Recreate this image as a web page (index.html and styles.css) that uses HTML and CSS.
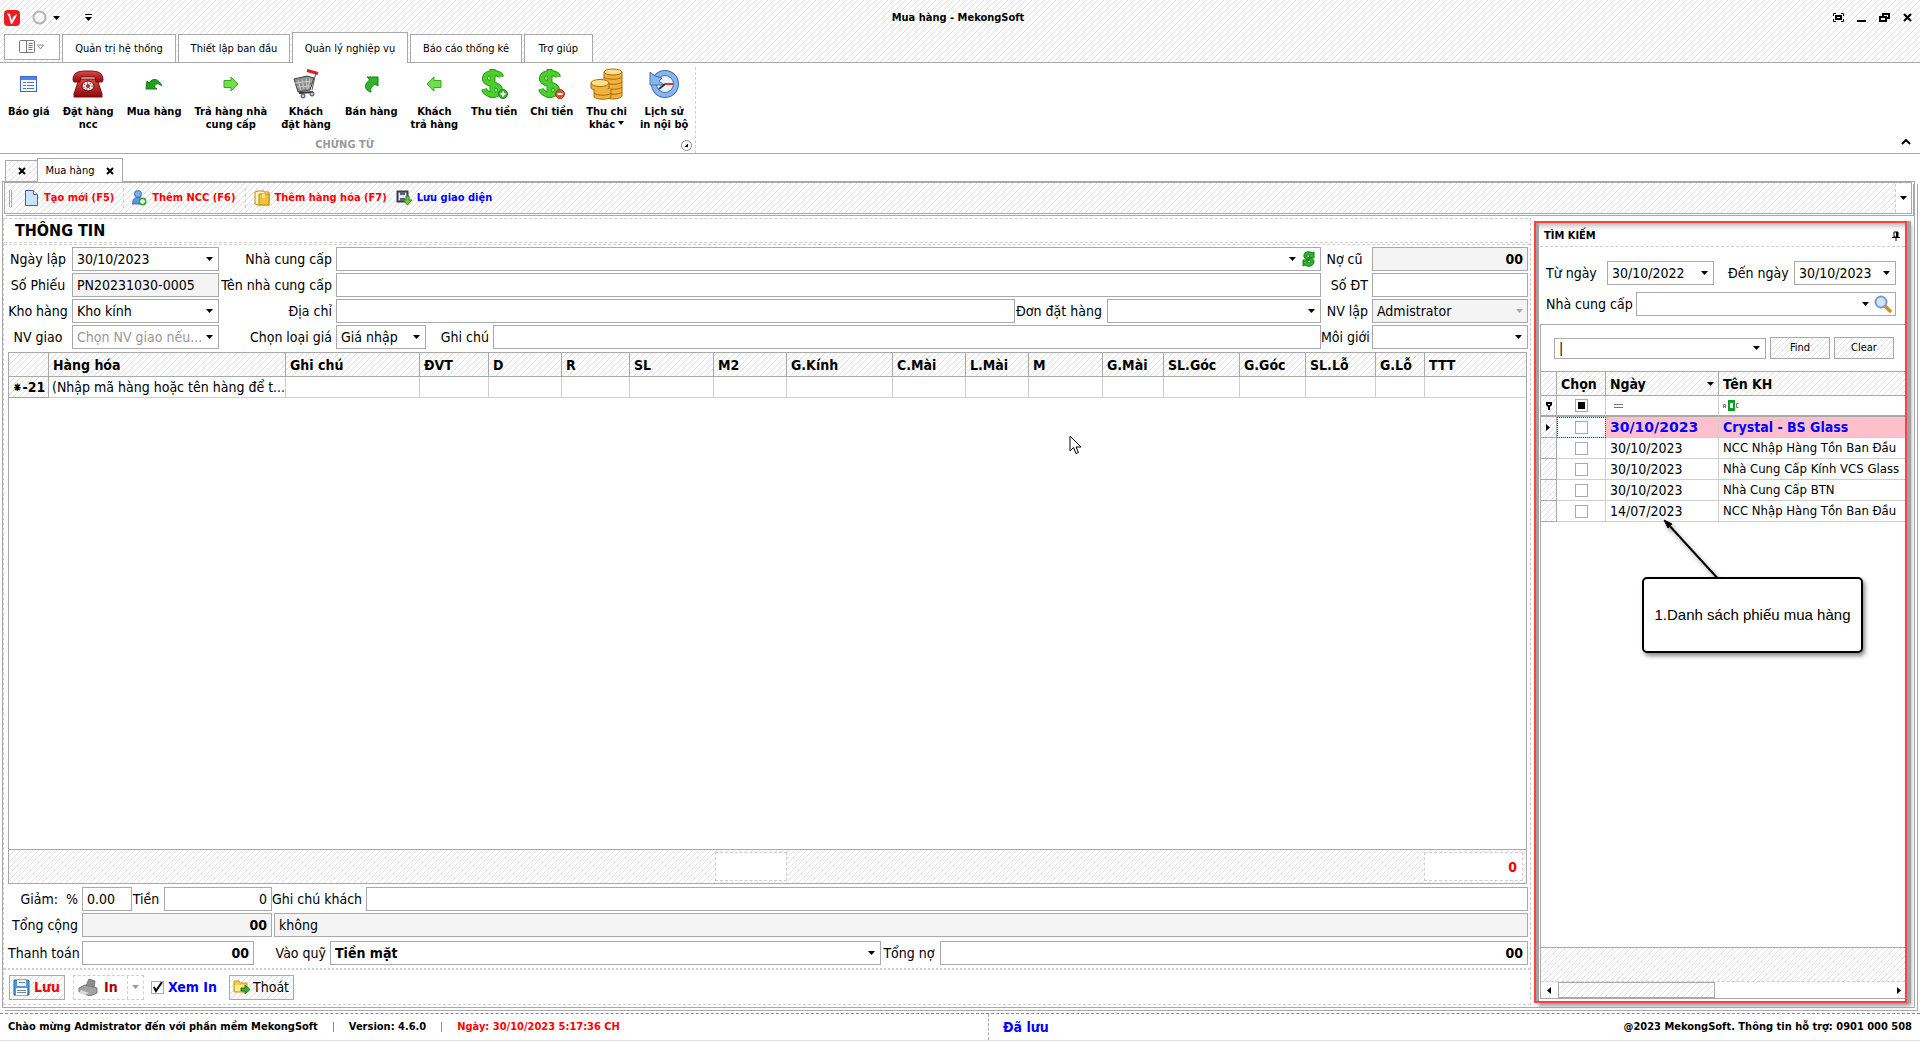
FILE: index.html
```html
<!DOCTYPE html>
<html lang="vi">
<head>
<meta charset="utf-8">
<title>Mua hàng - MekongSoft</title>
<link rel="stylesheet" href="styles.css">
</head>
<body>
<header class="top hatch">
  <div class="titlebar">
    <div class="quick">
      <svg width="16" height="16" viewBox="0 0 16 16"><rect width="16" height="16" rx="4" fill="#ed1c24"/><path d="M3 3l3 1 2 7 1-4 4-3-1 3-4 7H7L5 7z" fill="#fff"/></svg>
      <svg width="15" height="15" viewBox="0 0 15 15"><circle cx="7.500" cy="7.500" r="6" fill="none" stroke="#b4b4b4" stroke-width="2"/></svg>
      <svg width="7" height="4" viewBox="0 0 7 4"><path d="M0 0h7L3.500 4z"/></svg>
      <svg class="more" width="7" height="7" viewBox="0 0 7 7"><path d="M0 0h7v1H0zM0 3h7L3.500 7z"/></svg>
    </div>
    <h1 class="title">Mua hàng - MekongSoft</h1>
    <div class="winbtns">
      <button aria-label="Toàn màn hình"><svg width="11" height="9" viewBox="0 0 11 9"><path d="M.5 3V.5H3M8 .5h2.500V3M10.500 6v2.500H8M3 8.500H.5V6" fill="none" stroke="#000"/><rect x="3" y="3" width="5" height="3" fill="none" stroke="#000" stroke-width="2"/></svg></button>
      <button aria-label="Thu nhỏ"><svg width="9" height="9" viewBox="0 0 9 9"><path d="M0 7h9v2H0z"/></svg></button>
      <button aria-label="Khôi phục"><svg width="11" height="9" viewBox="0 0 11 9"><path d="M1 4h6v4H1zM4 3V1h6v4H8" fill="none" stroke="#000" stroke-width="2"/></svg></button>
      <button aria-label="Đóng"><svg width="9" height="9" viewBox="0 0 9 9"><path d="M1 1l7 7M8 1L1 8" stroke="#000" stroke-width="2.200"/></svg></button>
    </div>
  </div>
  <nav class="tabs">
    <button class="tab file" aria-label="Tệp"><svg width="26" height="14" viewBox="0 0 26 14"><rect x=".5" y=".5" width="15" height="12" rx="1" fill="#fff" stroke="#777"/><path d="M7.500 1v12M9.500 3.500h4M9.500 5.500h4M9.500 7.500h4M9.500 9.500h4" stroke="#777"/><path d="M18.500 5h6l-3 4z" fill="none" stroke="#888"/></svg></button>
    <button class="tab t114">Quản trị hệ thống</button>
    <button class="tab t112">Thiết lập ban đầu</button>
    <button class="tab t116 active">Quản lý nghiệp vụ</button>
    <button class="tab t112">Báo cáo thống kê</button>
    <button class="tab t69">Trợ giúp</button>
  </nav>
</header>

<section class="ribbon">
  <div class="group">
    <div class="items">
      <button class="item"><span class="pic"><svg width="17" height="16" viewBox="0 0 17 16"><rect x=".5" y=".5" width="16" height="15" fill="#f3f7ff" stroke="#3a6bc8"/><path d="M1 1h15v3H1z" fill="#4d86e6"/><path d="M3 6.500h3M3 9.500h3M3 12.500h3M7 6.500h7M7 9.500h7M7 12.500h7" stroke="#5b76a8"/></svg></span>Báo giá</button>
      <button class="item"><span class="pic"><svg width="32" height="28" viewBox="0 0 32 28"><defs><linearGradient id="red" x1="0" y1="0" x2="0" y2="1"><stop offset="0" stop-color="#e04848"/><stop offset="1" stop-color="#8d0808"/></linearGradient></defs><path d="M7 9h18l5 15v3H2v-3z" fill="url(#red)" stroke="#7d0a0a"/><path d="M1 10C1 1 9 1 16 1s15 0 15 9l-1 2h-6l-1-5H9l-1 5H2z" fill="url(#red)" stroke="#7d0a0a"/><ellipse cx="16" cy="16" rx="6" ry="5" fill="#eee" stroke="#600"/><ellipse cx="16" cy="16" rx="4" ry="3" fill="none" stroke="#888" stroke-width="2" stroke-dasharray="1 2"/><circle cx="16" cy="16" r="2" fill="#b22"/></svg></span>Đặt hàng<br>ncc</button>
      <button class="item"><span class="pic"><svg width="18" height="12" viewBox="0 0 18 12"><path d="M1 11l1-8 2 2C8-1 14 1 17 8c-4-3-6-3-8 1l3 2z" fill="#22a01c" stroke="#157a10"/></svg></span>Mua hàng</button>
      <button class="item"><span class="pic"><svg width="16" height="16" viewBox="0 0 16 16"><path d="M1 4.500h7V1l7 7-7 7v-3.500H1z" fill="#6fe04e" stroke="#37a822"/></svg></span>Trả hàng nhà<br>cung cấp</button>
      <button class="item wide"><span class="pic"><svg width="26" height="30" viewBox="0 0 26 30"><path d="M1 10l13-3 7 2-4 12-12 2z" fill="#8d8d8d" stroke="#444"/><path d="M5 11l3 10M9 10l2 10M13 9l1 11M17 9l-2 11M2 14l17-2M4 18l14-1" stroke="#ccc"/><path d="M19 21l4-18" fill="none" stroke="#555"/><path d="M14 1.500l11 3" stroke="#d3202a" stroke-width="3"/><path d="M6 24l14-1" stroke="#333" stroke-width="2"/><circle cx="10" cy="27" r="2" fill="#bcd" stroke="#345"/><circle cx="19" cy="25" r="2" fill="#bcd" stroke="#345"/></svg></span>Khách<br>đặt hàng</button>
      <button class="item"><span class="pic"><svg width="16" height="17" viewBox="0 0 16 17"><path d="M4 1h11v9l-3-2c-3 2-5 4-4 8-5-1-9-7-1-12z" fill="#2fb427" stroke="#157a10"/></svg></span>Bán hàng</button>
      <button class="item"><span class="pic"><svg width="16" height="16" viewBox="0 0 16 16"><path d="M15 4.500H8V1L1 8l7 7v-3.500h7z" fill="#6fe04e" stroke="#37a822"/></svg></span>Khách<br>trả hàng</button>
      <button class="item"><span class="pic"><svg width="27" height="32" viewBox="0 0 27 32"><path d="M20 9C19 4 5 3 4 10s15 5 15 12-14 6-16-1M11.500 1v29" fill="none" stroke="#2a9a17" stroke-width="6"/><path d="M20 9C19 4 5 3 4 10s15 5 15 12-14 6-16-1M11.500 2v27" fill="none" stroke="#4ccf2c" stroke-width="4"/><circle cx="22" cy="26" r="4.500" fill="#41b035" stroke="#1c7c14"/><path d="M22 23.500v5M19.500 26h5" stroke="#fff" stroke-width="2"/></svg></span>Thu tiền</button>
      <button class="item"><span class="pic"><svg width="27" height="32" viewBox="0 0 27 32"><path d="M20 9C19 4 5 3 4 10s15 5 15 12-14 6-16-1M11.500 1v29" fill="none" stroke="#2a9a17" stroke-width="6"/><path d="M20 9C19 4 5 3 4 10s15 5 15 12-14 6-16-1M11.500 2v27" fill="none" stroke="#4ccf2c" stroke-width="4"/><circle cx="22" cy="26" r="4.500" fill="#e8502a" stroke="#b02c10"/><path d="M19.500 26h5" stroke="#fff" stroke-width="2"/></svg></span>Chi tiền</button>
      <button class="item"><span class="pic"><svg width="33" height="32" viewBox="0 0 33 32"><g fill="#f0b23c" stroke="#a86a10"><path d="M14 4v24c2 4 16 4 18 0V4z"/><path d="M14 9c2 3 16 3 18 0M14 14c2 3 16 3 18 0M14 19c2 3 16 3 18 0M14 24c2 3 16 3 18 0" fill="none"/><ellipse cx="23" cy="4" rx="9" ry="3" fill="#ffdf8a"/><path d="M4 25v4c3 3 15 3 17 0v-4z"/><path d="M1 15v5c2 3 15 4 18 0v-5z"/><path d="M4 21v4c3 3 15 3 17 0v-4"/><ellipse cx="10" cy="15" rx="9" ry="3.500" fill="#ffdf8a"/></g></svg></span>Thu chi<br><span class="drop">khác</span></button>
      <button class="item"><span class="pic"><svg width="30" height="30" viewBox="0 0 30 30"><circle cx="16" cy="15" r="11" fill="#eef3fb" stroke="#3f6fb5" stroke-width="6"/><circle cx="16" cy="15" r="11" fill="none" stroke="#8ab6ea" stroke-width="4"/><path d="M1 3v13h14l-5-4 3-3-7-2z" fill="#8ab6ea" stroke="#3f6fb5"/><path d="M10 20l6-5" stroke="#333" stroke-width="2"/><path d="M16 15h8" stroke="#d33" stroke-width="2"/></svg></span>Lịch sử<br>in nội bộ</button>
    </div>
    <div class="caption"><span>CHỨNG TỪ</span><button class="launcher" aria-label="Mở rộng"><svg width="11" height="11" viewBox="0 0 11 11"><circle cx="5.500" cy="5.500" r="5" fill="#fff" stroke="#888"/><path d="M7 3.500V7H3.500z"/></svg></button></div>
  </div>
  <button class="collapse" aria-label="Thu gọn"><svg width="10" height="6" viewBox="0 0 10 6"><path d="M1 5l4-4 4 4" fill="none" stroke="#000" stroke-width="2"/></svg></button>
</section>

<nav class="doctabs">
  <button class="doctab hatch" aria-label="Đóng"><svg width="8" height="8" viewBox="0 0 8 8"><path d="M1 1l6 6M7 1L1 7" stroke="#000" stroke-width="2"/></svg></button>
  <button class="doctab current">Mua hàng <svg width="8" height="8" viewBox="0 0 8 8"><path d="M1 1l6 6M7 1L1 7" stroke="#000" stroke-width="2"/></svg></button>
</nav>

<main class="frame">
  <div class="toolbar hatch">
    <span class="grip"></span>
    <button class="tool"><svg width="15" height="16" viewBox="0 0 15 16"><path d="M1.500.5h8l4 4v11h-12z" fill="#cfe2fb" stroke="#3f66a8"/><path d="M9.500.5v4h4" fill="#fff" stroke="#3f66a8"/></svg>Tạo mới (F5)</button>
    <button class="tool line"><svg width="15" height="16" viewBox="0 0 15 16"><circle cx="6" cy="4" r="3.500" fill="#7ab0ee" stroke="#3b6db4"/><path d="M.5 14c0-9 11-9 11 0z" fill="#5b98e2" stroke="#3b6db4"/><circle cx="10.500" cy="11.500" r="4" fill="#35a52e"/><path d="M10.500 9v5M8 11.500h5" stroke="#fff" stroke-width="2"/></svg>Thêm NCC (F6)</button>
    <button class="tool line"><svg width="16" height="16" viewBox="0 0 16 16"><path d="M1 2l3-1h6v1h5v13H4l-3-1z" fill="#fff3c2" stroke="#b98a12"/><path d="M5 4h10v11H5z" fill="#f3c335" stroke="#b98a12"/><path d="M8 4v4h3V4" fill="#ffe68c"/></svg>Thêm hàng hóa (F7)</button>
    <button class="tool blue"><svg width="16" height="16" viewBox="0 0 16 16"><path d="M1.500 1.500h10v10h-10z" fill="#e6e9f0" stroke="#333c50" stroke-width="2"/><path d="M4 2h5v3H4zM4 8h5v3H4z" fill="#5a6478"/><path d="M10 6h3v4h3l-4.500 5L7 10h3z" fill="#7cc62c" stroke="#3d7a10"/></svg>Lưu giao diện</button>
    <button class="overflow" aria-label="Thêm"><svg width="7" height="4" viewBox="0 0 7 4"><path d="M0 0h7L3.500 4z"/></svg></button>
  </div>

  <div class="work">
    <form class="voucher">
      <h2 class="heading">THÔNG TIN</h2>
      <div class="rows">
        <div class="row">
          <label class="l1" for="ngay">Ngày lập</label><input class="combo w147" id="ngay" value="30/10/2023">
          <label class="l2" for="ncc">Nhà cung cấp</label>
          <div class="field grow"><input class="combo" id="ncc"><svg width="16" height="16" viewBox="0 0 16 16"><path d="M3 6c-1-6 6-6 8-4l2-1v6H7l2-2C7 3 5 4 6 6c3 1 7 1 7 5-1 5-6 5-9 3l-2 1V9h6l-2 2c2 1 4 1 4-1C8 9 4 9 3 6z" fill="#2fb52b" stroke="#12780f"/></svg></div>
          <label class="l3 mid" for="nocu">Nợ cũ</label><input class="w156 num ro" id="nocu" value="00" readonly>
        </div>
        <div class="row">
          <label class="l1" for="sophieu">Số Phiếu</label><input class="w147 ro" id="sophieu" value="PN20231030-0005" readonly>
          <label class="l2" for="tenncc">Tên nhà cung cấp</label><input class="grow" id="tenncc">
          <label class="l3" for="sdt">Số ĐT</label><input class="w156" id="sdt">
        </div>
        <div class="row">
          <label class="l1" for="kho">Kho hàng</label><select class="w147" id="kho"><option>Kho kính</option></select>
          <label class="l2" for="diachi">Địa chỉ</label><input class="grow" id="diachi">
          <label class="l4" for="don">Đơn đặt hàng</label><input class="combo w214" id="don">
          <label class="l3" for="nvlap">NV lập</label><select class="w156" id="nvlap" disabled><option>Admistrator</option></select>
        </div>
        <div class="row">
          <label class="l1" for="nvgiao">NV giao</label><select class="w147 empty" id="nvgiao"><option>Chọn NV giao nếu...</option></select>
          <label class="l2" for="loaigia">Chọn loại giá</label><select class="w90" id="loaigia"><option>Giá nhập</option></select>
          <label class="l5" for="ghichu">Ghi chú</label><input class="grow" id="ghichu">
          <label class="l3" for="moigioi">Môi giới</label><input class="combo w156" id="moigioi">
        </div>
      </div>

      <div class="grid">
        <table class="lines">
          <colgroup><col class="c40"><col class="c237"><col class="c134"><col class="c69"><col class="c73"><col class="c68"><col class="c84"><col class="c73"><col class="c106"><col class="c73"><col class="c63"><col class="c74"><col class="c61"><col class="c76"><col class="c66"><col class="c70"><col class="c49"><col></colgroup>
          <thead class="hatch"><tr><th></th><th>Hàng hóa</th><th>Ghi chú</th><th>ĐVT</th><th>D</th><th>R</th><th>SL</th><th>M2</th><th>G.Kính</th><th>C.Mài</th><th>L.Mài</th><th>M</th><th>G.Mài</th><th>SL.Góc</th><th>G.Góc</th><th>SL.Lỗ</th><th>G.Lỗ</th><th>TTT</th></tr></thead>
          <tbody><tr><td class="ind hatch">⁕-21</td><td>(Nhập mã hàng hoặc tên hàng để t...</td><td></td><td></td><td></td><td></td><td></td><td></td><td></td><td></td><td></td><td></td><td></td><td></td><td></td><td></td><td></td><td></td></tr></tbody>
        </table>
        <div class="totals hatch"><output class="sum m2"></output><output class="sum ttt">0</output></div>
        <svg class="cursor" width="13" height="20" viewBox="0 0 13 20"><path d="M1 1v15l3.500-3.500L7 18.500l2.500-1L7 12h5z" fill="#fff" stroke="#000"/></svg>
      </div>

      <div class="pay">
        <div class="row">
          <label class="p1" for="giam">Giảm: &nbsp;%</label><input class="w50" id="giam" value="0.00">
          <label class="p2" for="tien">Tiền</label><input class="w108 right" id="tien" value="0">
          <label class="p3" for="gck">Ghi chú khách</label><input class="grow" id="gck">
        </div>
        <div class="row">
          <label class="p1" for="tong">Tổng cộng</label><input class="w190 num ro" id="tong" value="00" readonly>
          <input class="grow ro near" aria-label="Bằng chữ" value="không" readonly>
        </div>
        <div class="row last">
          <label class="p1" for="tt">Thanh toán</label><input class="w172 num" id="tt" value="00">
          <label class="p4" for="quy">Vào quỹ</label><select class="fund strong" id="quy"><option>Tiền mặt</option></select>
          <label class="p5" for="no">Tổng nợ</label><input class="debt num" id="no" value="00">
        </div>
      </div>

      <div class="actions">
        <button type="button" class="act save hatch"><svg width="17" height="17" viewBox="0 0 17 17"><path d="M1 1h14l1 1v14H1z" fill="#4f9ddb" stroke="#23659e"/><path d="M4 1h9v6H4z" fill="#e8f3fb"/><path d="M3 9h11v7H3z" fill="#fff"/><path d="M4 11.500h9M4 13.500h9M6 3.500h6" stroke="#789"/></svg>Lưu</button>
        <div class="split">
          <button type="button" class="print"><svg width="21" height="18" viewBox="0 0 21 18"><path d="M8 8l3-7 6 2-1 6z" fill="#8d8d8d" stroke="#777"/><path d="M1 10l6-3 12 3v5l-7 3-11-4z" fill="#a2a2a2" stroke="#777"/><path d="M3 12l8 3-4 2-6-2z" fill="#ddd"/></svg>In</button>
          <button type="button" class="more" aria-label="Chọn mẫu in"><svg width="7" height="4" viewBox="0 0 7 4"><path d="M0 0h7L3.500 4z" fill="#999"/></svg></button>
        </div>
        <label class="preview"><input type="checkbox" checked>Xem In</label>
        <button type="button" class="act exit hatch"><svg width="17" height="16" viewBox="0 0 17 16"><path d="M1 2h5l1 2h7v9H1z" fill="#f6cf4a" stroke="#c49a1c"/><path d="M2 6h11l-1 6H2z" fill="#ffe98f"/><path d="M8 9h4V6l5 4.500-5 4.500v-3H8z" fill="#3fae2a" stroke="#1f7a14"/></svg>Thoát</button>
      </div>
    </form>

    <aside class="search">
      <h2 class="caption2">TÌM KIẾM <svg width="8" height="10" viewBox="0 0 8 10"><path d="M2 1h4v5H2zM0 6.500h8M4 7v3" fill="none" stroke="#000"/><path d="M4 1h2v5H4z"/></svg></h2>
      <div class="filters">
        <div class="frow">
          <label for="tu">Từ ngày</label><input class="combo w107" id="tu" value="30/10/2022">
          <label class="to" for="den">Đến ngày</label><input class="combo w102" id="den" value="30/10/2023">
        </div>
        <div class="frow">
          <label class="wide" for="ncc2">Nhà cung cấp</label>
          <div class="field w260"><input class="combo" id="ncc2"><svg width="18" height="18" viewBox="0 0 18 18"><path d="M10 10l6 6" stroke="#d88a1c" stroke-width="3.500" stroke-linecap="round"/><circle cx="7" cy="7" r="5.500" fill="#cfe4fa" stroke="#7d9cc8" stroke-width="2"/></svg></div>
        </div>
      </div>
      <div class="results">
        <div class="findbar"><input class="combo find" aria-label="Tìm" value="|"><button class="hatch">Find</button><button class="hatch">Clear</button></div>
        <table class="list">
          <colgroup><col class="c16"><col class="c49"><col class="c113"><col></colgroup>
          <thead class="hatch"><tr><th></th><th>Chọn</th><th class="sorted">Ngày</th><th>Tên KH</th></tr></thead>
          <tbody>
            <tr class="auto"><td class="ind hatch"><svg width="6" height="8" viewBox="0 0 6 8"><path d="M0 0h6v3L4 5v3H2V5L0 3z"/><path d="M2 2h2v1H2z" fill="#fff"/></svg></td><td class="tick"><input type="checkbox" class="mixed" aria-label="Lọc chọn"></td><td class="op"><svg width="9" height="4" viewBox="0 0 9 4"><path d="M0 .5h9M0 3.500h9" stroke="#777"/></svg></td><td><svg width="16" height="11" viewBox="0 0 16 11"><rect x="5" width="7" height="11" fill="#0a9d23"/><path d="M.5 8V4.500h2V8M.5 6.500h2M15.500 3.500h-2v4h2" fill="none" stroke="#777"/><path d="M7 3h3v5H7z" fill="#fff"/></svg></td></tr>
            <tr class="sel"><td class="ind hatch"><svg width="4" height="7" viewBox="0 0 4 7"><path d="M0 0l4 3.500L0 7z"/></svg></td><td class="tick focus"><input type="checkbox" aria-label="Chọn phiếu 1"></td><td class="date">30/10/2023</td><td>Crystal - BS Glass</td></tr>
            <tr><td class="ind hatch"></td><td class="tick"><input type="checkbox" aria-label="Chọn phiếu 2"></td><td>30/10/2023</td><td class="name">NCC Nhập Hàng Tồn Ban Đầu</td></tr>
            <tr><td class="ind hatch"></td><td class="tick"><input type="checkbox" aria-label="Chọn phiếu 3"></td><td>30/10/2023</td><td class="name">Nhà Cung Cấp Kính VCS Glass</td></tr>
            <tr><td class="ind hatch"></td><td class="tick"><input type="checkbox" aria-label="Chọn phiếu 4"></td><td>30/10/2023</td><td class="name">Nhà Cung Cấp BTN</td></tr>
            <tr><td class="ind hatch"></td><td class="tick"><input type="checkbox" aria-label="Chọn phiếu 5"></td><td>14/07/2023</td><td class="name">NCC Nhập Hàng Tồn Ban Đầu</td></tr>
          </tbody>
        </table>
        <div class="listfoot hatch"></div>
        <div class="scroll"><svg width="4" height="7" viewBox="0 0 4 7"><path d="M4 0L0 3.500 4 7z"/></svg><span class="track"><span class="thumb hatch"></span></span><svg width="4" height="7" viewBox="0 0 4 7"><path d="M0 0l4 3.500L0 7z"/></svg></div>
      </div>
      <svg class="arrow" width="62" height="66" viewBox="0 0 62 66"><path d="M4 4l54 59" stroke="#000" stroke-width="2"/><path d="M1 1l8 4-4 4z" stroke="#000"/></svg>
      <p class="callout">1.Danh sách phiếu mua hàng</p>
    </aside>
  </div>
</main>

<footer class="status">
  <div class="left"><span>Chào mừng Admistrator đến với phần mềm MekongSoft</span><i class="bar"></i><span>Version: 4.6.0</span><i class="bar"></i><span class="now">Ngày: 30/10/2023 5:17:36 CH</span></div>
  <div class="state">Đã lưu</div>
  <div class="copy">@2023 MekongSoft. Thông tin hỗ trợ: 0901 000 508</div>
</footer>
</body>
</html>
```
FILE: styles.css
```css
* { box-sizing: border-box; }

:root {
  --line: #a9a9a9;
  --soft: #cfcfcf;
  --arrow: url("data:image/svg+xml,%3Csvg xmlns='http://www.w3.org/2000/svg' width='7' height='4'%3E%3Cpath d='M0 0h7L3.500 4z'/%3E%3C/svg%3E");
  --arrow-off: url("data:image/svg+xml,%3Csvg xmlns='http://www.w3.org/2000/svg' width='7' height='4'%3E%3Cpath fill='%23aaa' d='M0 0h7L3.500 4z'/%3E%3C/svg%3E");
  --hatch: url("data:image/svg+xml,%3Csvg xmlns='http://www.w3.org/2000/svg' width='6' height='6'%3E%3Cpath d='M-1 1l2-2M-1 7l8-8M5 7l2-2' fill='none' stroke='%23e2e2e2'/%3E%3C/svg%3E");
}

body {
  margin: 0;
  min-height: 100vh;
  display: flex;
  flex-direction: column;
  background: #fff;
  color: #000;
  font: 14px/18px "DejaVu Sans Condensed", "Noto Sans", sans-serif;
  border-bottom: 1px solid #d5e4ee;
}

h1, h2, p { margin: 0; }
svg { flex: none; display: block; }
button, input, select { font: inherit; color: inherit; margin: 0; }
button { border: 0; padding: 0; background: none; }

.hatch { background-image: var(--hatch); }

/* title bar and ribbon tabs */
.titlebar { display: flex; align-items: center; height: 32px; padding: 3px 8px 0 4px; }
.quick, .winbtns { flex: 1; display: flex; align-items: center; }
.quick { gap: 12px; }
.quick svg:nth-child(3) { margin-left: -6px; }
.quick .more { margin-left: 13px; }
.winbtns { justify-content: flex-end; gap: 13px; }
.title { font-size: 11px; line-height: 14px; }
.tabs { display: flex; align-items: flex-end; gap: 2px; height: 31px; padding-left: 4px; border-bottom: 1px solid var(--line); }
.tab { height: 28px; padding: 1px 0 0; border: 1px solid var(--line); border-bottom: 0; background: #fff; font-size: 11px; white-space: nowrap; }
.tab.file { height: 26px; margin-bottom: 2px; border-bottom: 1px solid var(--line); padding: 0 14px; }
.tab.active { height: 31px; margin-bottom: -1px; }
.t69 { width: 69px; }
.t112 { width: 112px; }
.t114 { width: 114px; }
.t116 { width: 116px; }

.ribbon { display: flex; justify-content: space-between; height: 91px; border-bottom: 1px solid var(--line); }
.group { display: flex; flex-direction: column; justify-content: space-between; padding: 4px 7px 1px 8px; margin-top: 4px; border-right: 1px dashed var(--soft); }
.items { display: flex; align-items: flex-start; gap: 13px; margin-top: -4px; }
.item { font-weight: bold; font-size: 11px; line-height: 13px; white-space: nowrap; }
.item.wide { padding: 0 1px; }
.pic { display: flex; align-items: center; justify-content: center; height: 34px; margin-bottom: 4px; }
.drop::after { content: ""; display: inline-block; margin-left: 3px; vertical-align: 3px; border: 3px solid transparent; border-top: 4px solid #000; border-bottom: 0; }
.caption { display: flex; margin-right: -4px; font-weight: bold; font-size: 11px; line-height: 14px; color: #999; }
.caption span { flex: 1; text-align: center; }
.collapse { align-self: flex-end; margin: 0 9px 8px 0; }

/* document tabs */
.doctabs { display: flex; align-items: flex-end; height: 27px; padding-left: 5px; }
.doctab { display: flex; align-items: center; justify-content: center; width: 32px; height: 21px; border: 1px solid var(--line); border-bottom: 0; border-right: 0; font-size: 11px; }
.doctab.current { position: relative; width: 86px; height: 24px; gap: 12px; margin-bottom: -1px; background: #fff; border-right: 1px solid var(--line); }

/* frame with the doubled edge */
.frame { flex: 1; display: flex; flex-direction: column; margin: 0 5px 0 2px; border: 1px solid var(--line); box-shadow: 2px 2px 0 #fff, 3px 3px 0 var(--line); }
.toolbar { display: flex; align-items: center; height: 32px; margin: 0 2px 0 1px; padding-left: 4px; border: 1px solid var(--line); box-shadow: 1px 1px 0 #fff, 2px 2px 0 var(--line); }
.grip { width: 3px; height: 17px; border: 1px solid var(--line); border-width: 0 1px; }
.tool { display: flex; align-items: center; gap: 5px; height: 20px; padding-left: 9px; margin-left: 6px; font-weight: bold; font-size: 11px; color: #f00; }
.grip + .tool { margin-left: 4px; padding-left: 8px; }
.tool.line { border-left: 1px dashed var(--soft); padding-left: 8px; margin-left: 9px; }
.tool.blue { color: #00f; padding-left: 3px; }
.overflow { display: flex; align-items: center; justify-content: center; width: 16px; height: 28px; margin-left: auto; border-left: 1px dashed var(--soft); background: #fff; }

.work { flex: 1; display: flex; min-height: 0; padding: 4px 7px 2px 0; }
.voucher { flex: 1; min-width: 0; display: flex; flex-direction: column; border: 1px dashed var(--soft); border-width: 0 1px 1px; }
.heading { height: 25px; margin-right: 2px; padding-left: 11px; border: 1px dashed var(--soft); border-left: 0; border-right: 0; font-size: 16px; line-height: 24px; }
.rows, .pay { display: flex; flex-direction: column; gap: 2px; }
.rows { margin-top: 1px; padding: 2px 2px 3px 4px; border-top: 1px dashed var(--soft); }
.pay { padding: 3px 2px 3px 4px; border-bottom: 2px dotted var(--soft); }
.row { display: flex; align-items: center; height: 24px; }
.row.last { margin-top: 2px; }
.row input, .row select, .frow input, .findbar input { height: 24px; min-width: 0; padding: 0 4px; border: 1px solid var(--line); border-radius: 0; outline: 0; background-color: #fff; }
select { appearance: none; opacity: 1; }
select, input.combo { background: #fff var(--arrow) no-repeat right 5px center; }
select:disabled { background: #f4f4f4 var(--arrow-off) no-repeat right 4px center; color: #000; opacity: 1; }
select.empty { color: #999; }
.row .ro { background-color: #f4f4f4; }
.num { font-weight: bold; text-align: right; }
.right { text-align: right; }
.strong { font-weight: bold; }
.grow { flex: 1; }
.fund { flex: 15 1 0; }
.debt { flex: 16 1 0; }
.row label { flex: none; white-space: nowrap; }
.l1 { width: 60px; margin-right: 4px; text-align: center; }
.l2 { width: 113px; margin-right: 4px; text-align: right; }
.l3 { width: 47px; margin-right: 4px; text-align: right; }
.l3.mid { text-align: center; }
.l4 { width: 88px; margin-right: 4px; text-align: center; }
.l5 { width: 63px; margin-right: 4px; text-align: right; }
.p1 { width: 70px; margin-right: 4px; text-align: right; }
.p2 { width: 28px; margin-right: 4px; text-align: center; }
.p3 { width: 90px; margin-right: 4px; text-align: center; }
.p4 { width: 72px; margin-right: 4px; text-align: right; }
.p5 { width: 55px; margin-right: 4px; text-align: center; }
.near { margin-left: 2px; }
.w50 { width: 50px; }
.w90 { width: 90px; }
.w102 { width: 102px; }
.w107 { width: 107px; }
.w108 { width: 108px; }
.w147 { width: 147px; }
.w156 { width: 156px; }
.w172 { width: 172px; }
.w190 { width: 190px; }
.w214 { width: 214px; }
.w260 { width: 260px; }
.field { display: flex; align-items: center; height: 24px; padding-right: 3px; border: 1px solid var(--line); background: #fff; }
.field input.combo { flex: 1; height: 22px; border: 0; }

/* voucher lines */
.grid { position: relative; flex: 1; display: flex; flex-direction: column; margin: 0 3px 0 4px; border: 1px solid var(--line); }
table { width: 100%; table-layout: fixed; border-collapse: separate; border-spacing: 0; }
th, td { padding: 0 0 0 4px; border-right: 1px solid var(--soft); border-bottom: 1px solid var(--soft); text-align: left; white-space: nowrap; overflow: hidden; }
th { height: 24px; border-color: var(--line); }
td { height: 21px; }
td.ind { border-color: var(--line); }
.lines td.ind { font-weight: bold; }
.lines td { padding-left: 3px; }
.totals { display: flex; height: 34px; margin-top: auto; padding: 2px 3px 2px 706px; border-top: 1px solid var(--line); }
.sum { border: 1px dashed var(--soft); background: #fff; font-weight: bold; color: #f00; text-align: right; line-height: 28px; padding-right: 5px; }
.m2 { width: 72px; }
.ttt { width: 99px; margin-left: auto; }
.cursor { position: absolute; left: 1060px; top: 82px; }
.c16 { width: 16px; }
.c40 { width: 40px; }
.c49 { width: 49px; }
.c61 { width: 61px; }
.c63 { width: 63px; }
.c66 { width: 66px; }
.c68 { width: 68px; }
.c69 { width: 69px; }
.c70 { width: 70px; }
.c73 { width: 73px; }
.c74 { width: 74px; }
.c76 { width: 76px; }
.c84 { width: 84px; }
.c106 { width: 106px; }
.c113 { width: 113px; }
.c134 { width: 134px; }
.c237 { width: 237px; }

/* action buttons */
.actions { display: flex; align-items: center; height: 34px; padding-left: 5px; }
.act { display: flex; align-items: center; gap: 4px; height: 25px; padding: 0 4px 0 3px; border: 1px solid var(--line); }
.save { color: #f00; font-weight: bold; }
.exit { margin-left: 12px; gap: 3px; }
.split { display: flex; height: 25px; margin: 0 7px 0 8px; border: 1px dashed var(--soft); }
.print { display: flex; align-items: center; gap: 5px; width: 53px; padding-left: 4px; font-weight: bold; color: #a00; }
.split .more { display: flex; align-items: center; padding: 0 4px; border-left: 1px dashed var(--soft); }
.preview { display: flex; align-items: center; gap: 4px; font-weight: bold; color: #00f; }
input[type="checkbox"] { appearance: none; display: block; width: 13px; height: 13px; border: 1px solid var(--line); background: #fff; }
.preview input:checked { background: url("data:image/svg+xml,%3Csvg xmlns='http://www.w3.org/2000/svg' width='11' height='11'%3E%3Cpath d='M2 5l2 4L10 0' fill='none' stroke='%23000' stroke-width='2'/%3E%3C/svg%3E"); }
input[type="checkbox"].mixed { background: #000; box-shadow: inset 0 0 0 2px #fff; }

/* search pane */
.search { position: relative; flex: none; width: 373px; display: flex; flex-direction: column; margin: 3px 0 2px 3px; padding: 0 0 2px 4px; border: 2px solid #fb4141; box-shadow: 4px 0 0 #a2a2a2, 4px 3px 4px #999, inset 3px 0 0 #a2a2a2, inset 0 6px 5px -3px #bbb; }
.caption2 { display: flex; align-items: center; justify-content: space-between; height: 24px; padding: 3px 5px 0 4px; border-bottom: 1px dashed var(--soft); font-size: 11px; line-height: 14px; }
.filters { display: flex; flex-direction: column; gap: 7px; padding: 14px 9px 8px 6px; }
.frow { display: flex; align-items: center; height: 24px; white-space: nowrap; }
.frow label { flex: none; width: 61px; }
.frow label.to { width: 66px; margin-left: 14px; }
.frow label.wide { width: 90px; }
.results { flex: 1; display: flex; flex-direction: column; border: 1px solid var(--line); border-right: 0; }
.findbar { display: flex; align-items: center; gap: 4px; height: 46px; padding: 0 11px 0 13px; }
.findbar .find { flex: 1; height: 21px; }
.findbar button { width: 60px; height: 22px; border: 1px solid var(--line); font-size: 11px; }
.list thead th { border-top: 1px solid var(--line); height: 25px; }
.list th:last-child, .list td:last-child, .lines th:last-child, .lines td:last-child { border-right: 0; }
.list td.ind { padding: 0 5px; }
.list .name { font-size: 13px; }
.list .tick { padding: 0; }
.tick input { margin: 0 auto; }
.sorted { background: var(--arrow) no-repeat right 4px center; }
.auto td { border-bottom: 2px solid var(--line); }
.list .op { padding-left: 8px; }
.sel td { background-color: #ffc0cb; color: #00f; font-weight: bold; }
.sel .date { font-family: "DejaVu Sans", sans-serif; }
.sel td.ind, .sel td.focus { background-color: #fff; }
.focus { outline: 1px dotted #e00; outline-offset: -1px; }
.listfoot { height: 35px; margin-top: auto; border-top: 1px solid var(--line); border-bottom: 1px dashed var(--soft); }
.scroll { display: flex; align-items: center; gap: 7px; height: 16px; padding: 0 4px 0 6px; }
.track { flex: 1; display: flex; }
.thumb { width: 157px; height: 16px; border: 1px solid var(--line); }

/* note over the pane */
.callout { position: absolute; left: 106px; top: 354px; width: 221px; height: 76px; border: 2px solid #000; border-radius: 5px; background: #fff; box-shadow: 2px 3px 4px #888; font: 15px/72px "Liberation Sans", sans-serif; text-align: center; white-space: nowrap; }
.arrow { position: absolute; left: 127px; top: 296px; filter: drop-shadow(2px 3px 2px #999); }

/* status bar */
.status { display: flex; align-items: center; height: 27px; margin-top: 5px; padding: 0 8px; border-top: 1px dashed #888; font-weight: bold; font-size: 11px; }
.left { flex: 0 0 calc(50% + 28px); display: flex; align-items: center; gap: 15px; white-space: nowrap; }
.bar { width: 1px; height: 10px; background: #a85; }
.now { color: #f00; }
.state { height: 26px; padding-left: 14px; border-left: 1px dashed var(--line); font-size: 14px; line-height: 26px; color: #00f; }
.copy { flex: 1; text-align: right; }
```
